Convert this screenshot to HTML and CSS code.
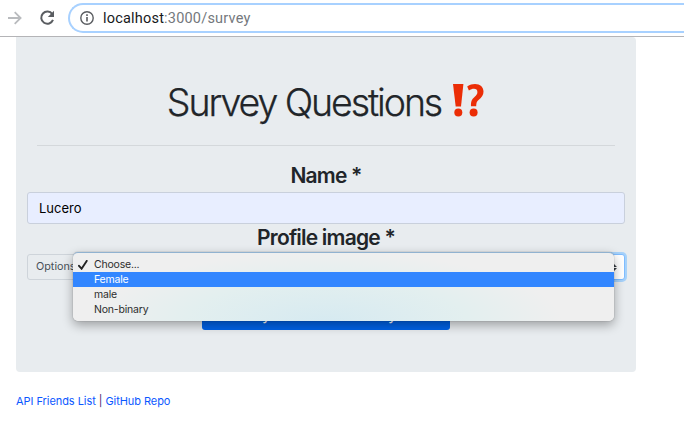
FILE: index.html
```html
<!DOCTYPE html>
<html lang="en">
<head>
<meta charset="utf-8">
<title>Survey</title>
<link rel="stylesheet" href="styles.css">
</head>
<body>
<header class="toolbar">
  <svg class="forward" width="14" height="14" viewBox="0 0 14 14"><path d="M0 7H12.5M6.7 1.1L12.6 7L6.7 12.9" fill="none" stroke="#b9bbbe" stroke-width="1.8"/></svg>
  <svg class="reload" width="16" height="16" viewBox="0 0 16 16"><path d="M13.3 4.1A6.1 6.1 0 1 0 14 9.9" fill="none" stroke="#5a5d61" stroke-width="2"/><path d="M15 .8V7H8.8Z" fill="#5a5d61"/></svg>
  <div class="address">
    <svg width="14" height="14" viewBox="0 0 14 14"><circle cx="7" cy="7" r="6.2" fill="none" stroke="#5a5d61" stroke-width="1.4"/><path d="M7 6V10.5M7 3.3V4.9" stroke="#5a5d61" stroke-width="1.6"/></svg>
    <span class="url"><b>localhost</b>:3000/survey</span>
  </div>
</header>
<main class="jumbotron">
  <h1><span class="title">Survey Questions</span>
    <svg width="32" height="33" viewBox="0 0 32 33" fill="#eb2d06"><path d="M0 0H10.4L8 22.5H2.7Z"/><circle cx="5.3" cy="28.6" r="4"/><path d="M14.2 2.4C17 .7 19.2 0 22 0C27.2 0 30.5 3 30.5 7.6C30.5 11.3 28.7 13.5 25.8 15.7C23.7 17.4 23.3 18.7 23.2 22.3H18C17.8 17.6 18.7 15.4 21.5 12.9C23.5 11.1 24.4 10 24.4 7.9C24.4 5.7 23.1 4.7 21 4.7C19.2 4.7 17.7 5.3 15.9 6.5Z"/><circle cx="20.6" cy="28.6" r="4"/></svg>
  </h1>
  <hr>
  <form>
    <h4>Name *</h4>
    <div class="text-input">Lucero</div>
    <h4>Profile image *</h4>
    <div class="select-group">
      <span class="prepend">Options</span>
      <span class="select"><svg width="6" height="7" viewBox="0 0 6 7"><path d="M0 3L3 0L6 3ZM0 4H6L3 7Z" fill="#343a40"/></svg></span>
      <ul class="menu">
        <li><svg width="10" height="10" viewBox="0 0 10 10"><path d="M1 5.8L3.6 8.7L8.7 .9" fill="none" stroke="#222" stroke-width="1.9" stroke-linecap="round"/></svg>Choose...</li>
        <li class="active">Female</li>
        <li>male</li>
        <li>Non-binary</li>
      </ul>
    </div>
    <div class="submit"><span>Find my new friend in my area</span></div>
  </form>
</main>
<footer><a>API Friends List</a> <span>|</span> <a>GitHub Repo</a></footer>
</body>
</html>
```
FILE: styles.css
```css
* { box-sizing: border-box; }
body { margin: 0; height: 442px; overflow: hidden; background: #fff; color: #212529; font-family: Inter, sans-serif; }
svg { display: block; flex: none; }
.toolbar { display: flex; align-items: flex-start; height: 37px; padding: 3px 0 0 8px; border-bottom: 1px solid #b4b4b7; }
.forward { margin-top: 8px; }
.reload { margin: 7px 0 0 17px; }
.address { display: flex; align-items: center; flex: 1; height: 30px; margin-left: 13px; padding-left: 10px; border: 2px solid #a8d1ff; border-right: 0; border-radius: 15px 0 0 15px; }
.url { margin-left: 9px; font: 14.5px Roboto, sans-serif; letter-spacing: .2px; color: #74787c; }
.url b { font-weight: 400; color: #17191c; }
.jumbotron { width: 620px; height: 335px; margin-left: 16px; padding: 43px 11px 0; border-radius: 0 4px 4px 4px; background: #e8ecef; }
h1 { display: flex; align-items: flex-start; justify-content: center; height: 65px; margin: 0; font-size: 37.5px; font-weight: 300; line-height: 46px; }
h1 svg { margin: 4px 0 0 12px; }
.title { letter-spacing: -2.08px; white-space: nowrap; -webkit-text-stroke: .25px #212529; }
hr { height: 1px; margin: 0 10px; border: 0; background: #d4d8db; }
h4 { height: 30px; margin: 0; font-size: 21px; font-weight: 600; line-height: 28px; text-align: center; letter-spacing: -.8px; }
form { padding-top: 16px; }
.text-input { height: 32px; padding-left: 11px; border: 1px solid #c9d0dc; border-radius: 3px; background: #e8eeff; color: #000; font-size: 13px; line-height: 31px; }
.select-group { position: relative; display: flex; height: 26px; }
.prepend { width: 55px; padding-left: 8px; border: 1px solid #ced4da; border-radius: 3px 0 0 3px; color: #495057; font-size: 10.8px; line-height: 24px; }
.select { display: flex; flex: 1; align-items: center; justify-content: flex-end; padding-right: 7px; border: 1px solid #80bdff; border-radius: 0 3px 3px 0; background: #fff; box-shadow: 0 0 0 2px #a7d2fa; }
.menu { position: absolute; z-index: 1; top: -2px; left: 46px; width: 541px; height: 69px; margin: 0; padding: 5px 0; border-top: 1px solid #91b2d0; border-radius: 5px; background: radial-gradient(ellipse 235px 70px at 254px 69px, #d6eaf1, #e3efef 60%, #efefef); box-shadow: 0 0 1px #0008, 0 4px 11px #0005; list-style: none; font-size: 10.5px; letter-spacing: -.2px; line-height: 15px; color: #2d2d2d; }
.menu { padding-top: 4px; }
.menu li { position: relative; height: 15px; padding-left: 21px; }
.menu svg { position: absolute; left: 5px; top: 3px; }
.menu .active { background: #3286ff; color: #fff; }
.submit { display: flex; align-items: flex-end; justify-content: center; width: 248px; height: 31px; margin: 19px auto 0; padding: 0 6px 6px 0; border-radius: 3px; background: #0062e6; color: #fff; font-size: 16px; letter-spacing: -.25px; line-height: 20px; white-space: nowrap; }
footer { padding: 21px 0 0 16px; color: #44266b; font-size: 11px; letter-spacing: -.06px; line-height: 17px; }
footer a { color: #0b58ff; }
```
